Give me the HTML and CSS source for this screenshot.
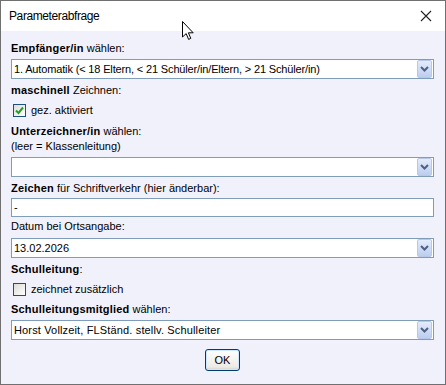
FILE: index.html
```html
<!DOCTYPE html>
<html>
<head>
  <meta charset="UTF-8">
  <title>Parameterabfrage</title>
  <link rel="stylesheet" href="styles.css">
</head>
<body>
  <div class="window">
    <div class="titlebar">
      <span class="title">Parameterabfrage</span>
      <svg class="close" width="12" height="12" viewBox="0 0 12 12">
        <path d="M1 1L11 11M11 1L1 11" stroke="#222" stroke-width="1.1" fill="none"/>
      </svg>
    </div>

    <div class="content">
      <div class="label"><b>Empfänger/in</b> wählen:</div>
      <div class="combo">
        <span class="value tight">1. Automatik (&lt; 18 Eltern, &lt; 21 Schüler/in/Eltern, &gt; 21 Schüler/in)</span>
        <span class="drop"><svg width="9" height="6" viewBox="0 0 9 6"><path d="M1 1L4.5 4.5L8 1" stroke="#4d6185" stroke-width="2" fill="none"/></svg></span>
      </div>

      <div class="label gap4"><b>maschinell</b> Zeichnen:</div>
      <div class="check-row">
        <span class="checkbox checked"><svg width="11" height="11" viewBox="0 0 11 11"><path d="M2 5.5L4.5 8L9 2.5" stroke="#21a121" stroke-width="2" fill="none"/></svg></span>
        <span>gez. aktiviert</span>
      </div>

      <div class="label gap7"><b>Unterzeichner/in</b> wählen:</div>
      <div class="label gap1">(leer = Klassenleitung)</div>
      <div class="combo">
        <span class="value"></span>
        <span class="drop"><svg width="9" height="6" viewBox="0 0 9 6"><path d="M1 1L4.5 4.5L8 1" stroke="#4d6185" stroke-width="2" fill="none"/></svg></span>
      </div>

      <div class="label gap4"><b>Zeichen</b> für Schriftverkehr (hier änderbar):</div>
      <div class="textbox">-</div>

      <div class="label gap2">Datum bei Ortsangabe:</div>
      <div class="combo date">
        <span class="value">13.02.2026</span>
        <span class="drop"><svg width="9" height="6" viewBox="0 0 9 6"><path d="M1 1L4.5 4.5L8 1" stroke="#4d6185" stroke-width="2" fill="none"/></svg></span>
      </div>

      <div class="label gap4"><b>Schulleitung</b>:</div>
      <div class="check-row">
        <span class="checkbox"></span>
        <span>zeichnet zusätzlich</span>
      </div>

      <div class="label gap6"><b>Schulleitungsmitglied</b> wählen:</div>
      <div class="combo last">
        <span class="value wide">Horst Vollzeit, FLStänd. stellv. Schulleiter</span>
        <span class="drop"><svg width="9" height="6" viewBox="0 0 9 6"><path d="M1 1L4.5 4.5L8 1" stroke="#4d6185" stroke-width="2" fill="none"/></svg></span>
      </div>

      <div class="actions">
        <button class="ok">OK</button>
      </div>
    </div>

    <svg class="cursor" width="13" height="20" viewBox="0 0 13 20">
      <path d="M0.5 0.5L0.5 16L4.2 12.6L6.6 18.4L8.8 17.4L6.4 11.8L11.2 11.8Z" fill="#fff" stroke="#000" stroke-width="1"/>
    </svg>
  </div>
</body>
</html>
```

FILE: styles.css
```css
* {
  box-sizing: border-box;
}
body {
  margin: 0;
  font-family: "Liberation Sans", Arial, sans-serif;
  font-size: 11px;
  color: #000;
  background: #fff;
}
.window {
  position: relative;
  width: 446px;
  height: 385px;
  border: 1px solid #707070;
  background: #f1f1fc;
}
.titlebar {
  height: 30px;
  background: #fff;
  display: flex;
  align-items: center;
  justify-content: space-between;
  padding: 0 13px 0 8px;
}
.title {
  font-size: 12px;
  letter-spacing: -0.4px;
  color: #000;
}
.close {
  display: block;
}
.content {
  padding: 10px 11px 0 10px;
}
.label {
  height: 14px;
  line-height: 14px;
  white-space: nowrap;
}
.label b {
  letter-spacing: 0.2px;
}
.gap1 { margin-top: 1px; }
.gap2 { margin-top: 2px; }
.gap4 { margin-top: 4px; }
.gap6 { margin-top: 6px; }
.gap7 { margin-top: 7px; }

.combo {
  margin-top: 4px;
  height: 20px;
  border: 1px solid #7f9db9;
  background: #fff;
  display: flex;
  align-items: center;
  justify-content: space-between;
  padding: 0 1px 0 2px;
}
.combo.date {
  margin-top: 5px;
}
.combo.last {
  margin-top: 4px;
}
.value {
  white-space: nowrap;
}
.value.tight {
  letter-spacing: -0.15px;
}
.value.wide {
  letter-spacing: 0.15px;
}
.drop {
  width: 15px;
  height: 18px;
  border: 1px solid #b8c7ea;
  border-radius: 2px;
  background: linear-gradient(#e4ecfb, #bccdef);
  display: flex;
  align-items: center;
  justify-content: center;
}
.drop svg {
  display: block;
}
.textbox {
  margin-top: 3px;
  height: 19px;
  line-height: 17px;
  border: 1px solid #7f9db9;
  background: #fff;
  padding-left: 2px;
}
.check-row {
  margin-top: 7px;
  height: 13px;
  line-height: 13px;
  display: flex;
  align-items: center;
  gap: 5px;
  padding-left: 2px;
}
.checkbox {
  width: 13px;
  height: 13px;
  border: 1px solid #1c5180;
  background: linear-gradient(135deg, #dcdcd7, #fff);
  display: flex;
  align-items: center;
  justify-content: center;
}
.checkbox svg {
  display: block;
}
.actions {
  margin-top: 9px;
  display: flex;
  justify-content: center;
}
.ok {
  width: 35px;
  height: 22px;
  padding: 0;
  font-family: "Liberation Sans", Arial, sans-serif;
  font-size: 11px;
  color: #000;
  border: 1px solid #003c74;
  border-radius: 3px;
  background: linear-gradient(#fff, #ecebe6 85%, #d6d0c5);
  box-shadow: inset 0 0 0 1px #cee7ff;
}
.cursor {
  position: absolute;
  left: 181px;
  top: 20px;
}
```
